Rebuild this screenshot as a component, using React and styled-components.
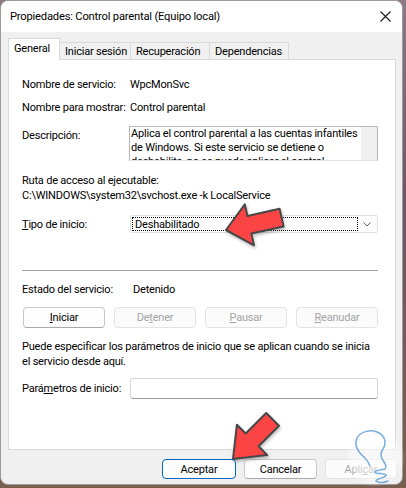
import React from "react";
import styled, { createGlobalStyle } from "styled-components";

const GlobalStyle = createGlobalStyle`
  html, body {
    margin: 0;
    padding: 0;
  }
  body {
    background: #6f5566;
    font-family: "Segoe UI", Roboto, "Liberation Sans", sans-serif;
    font-size: 11px;
    letter-spacing: -0.2px;
    color: #000;
  }
`;

const Screen = styled.div`
  position: relative;
  width: 406px;
  height: 488px;
  overflow: hidden;
  background: linear-gradient(180deg, #8d7a86 0%, #6f5566 40%, #7a5f4f 100%);
`;

const Window = styled.div`
  width: 403px;
  height: 485px;
  box-sizing: border-box;
  border: 1px solid #9b9b9b;
  border-radius: 8px;
  overflow: hidden;
  background: #f0f0f0;
  display: flex;
  flex-direction: column;
`;

const TitleBar = styled.div`
  height: 30px;
  flex: none;
  background: #fff;
  display: flex;
  align-items: center;
  justify-content: space-between;
  padding: 0 8px 1px 9px;
  font-size: 11.2px;
`;

const CloseBtn = styled.div`
  width: 12px;
  height: 12px;
  display: flex;
  align-items: center;
  justify-content: center;
  margin-right: 3px;
`;

const Body = styled.div`
  flex: 1;
  display: flex;
  flex-direction: column;
  padding: 6px 5px 0 7px;
`;

const Tabs = styled.div`
  display: flex;
  align-items: flex-end;
  height: 22px;
  position: relative;
  z-index: 1;
  margin-bottom: -1px;
`;

const Tab = styled.div`
  box-sizing: border-box;
  width: ${(p) => p.$w}px;
  height: ${(p) => (p.$active ? 22 : 18)}px;
  border: 1px solid #d9d9d9;
  border-bottom: ${(p) => (p.$active ? "none" : "1px solid #d9d9d9")};
  margin-left: ${(p) => (p.$active ? 0 : -1)}px;
  background: ${(p) => (p.$active ? "#fff" : "#f0f0f0")};
  display: flex;
  align-items: center;
  padding: ${(p) => (p.$active ? "0 0 3px 5px" : "0 0 0 5px")};
  white-space: nowrap;
`;

const Panel = styled.div`
  box-sizing: border-box;
  width: 388px;
  height: 391px;
  background: #fff;
  border: 1px solid #d9d9d9;
  padding: 0 17px 0 13px;
  display: flex;
  flex-direction: column;
`;

const Field = styled.div`
  display: grid;
  grid-template-columns: ${(p) => p.$col || 108}px 1fr;
  align-items: ${(p) => (p.$top ? "start" : "center")};
  margin-top: ${(p) => p.$mt || 0}px;
  line-height: 15px;
  white-space: nowrap;
`;

const Label = styled.div`
  padding-top: ${(p) => p.$pt || 0}px;
`;

const Line = styled.div`
  line-height: 15px;
  margin-top: ${(p) => p.$mt || 0}px;
  white-space: nowrap;
`;

const DescBox = styled.div`
  box-sizing: border-box;
  height: 35px;
  margin-left: -1px;
  border: 1px solid #b7b7b7;
  border-bottom-color: #e3e3e3;
  display: flex;
  overflow: hidden;
`;

const DescText = styled.div`
  flex: 1;
  height: 33px;
  overflow: hidden;
  padding: 0 2px 0 1px;
  line-height: 14px;
  white-space: normal;
`;

const ScrollTrack = styled.div`
  width: 16px;
  flex: none;
  background: #f0f0f0;
`;

const Combo = styled.div`
  box-sizing: border-box;
  height: 18px;
  border: 1px solid #e0e0e0;
  border-radius: 2px;
  display: flex;
  align-items: center;
  padding: 1px;
`;

const Focus = styled.div`
  flex: 1;
  height: 100%;
  box-sizing: border-box;
  border: 1px dotted #000;
  display: flex;
  align-items: center;
  padding-left: 2px;
`;

const Chevron = styled.div`
  width: 18px;
  display: flex;
  justify-content: center;
`;

const Separator = styled.div`
  height: 1px;
  background: #a0a0a0;
  margin-top: ${(p) => p.$mt}px;
`;

const ButtonRow = styled.div`
  display: flex;
  justify-content: space-between;
  margin: ${(p) => p.$mt}px 0 0 1px;
`;

const Button = styled.div`
  box-sizing: border-box;
  width: ${(p) => p.$w || 82}px;
  height: ${(p) => p.$h || 21}px;
  border: 1px solid ${(p) => (p.$primary ? "#0067c0" : p.$disabled ? "#e3e3e3" : "#c9c9c9")};
  border-bottom-color: ${(p) => (p.$primary ? "#0067c0" : p.$disabled ? "#e3e3e3" : "#a9a9a9")};
  border-radius: 4px;
  background: ${(p) => (p.$disabled ? "#fbfbfb" : "#fdfdfd")};
  color: ${(p) => (p.$disabled ? "#a3a3a3" : "#000")};
  display: flex;
  align-items: center;
  justify-content: center;
  line-height: 15px;
`;

const Key = styled.span`
  text-decoration: underline;
  text-underline-offset: 1px;
`;

const Paragraph = styled.div`
  margin-top: ${(p) => p.$mt}px;
  line-height: 15px;
  white-space: nowrap;
`;

const Input = styled.div`
  box-sizing: border-box;
  height: 21px;
  border: 1px solid #d6d6d6;
  border-bottom-color: #9a9a9a;
  border-radius: 3px;
`;

const Footer = styled.div`
  display: flex;
  justify-content: flex-end;
  gap: 8px;
  margin-top: 9px;
`;

const Overlay = styled.svg`
  position: absolute;
  left: 0;
  top: 0;
  pointer-events: none;
`;

const Arrow = ({ points }) => (
  <polygon
    points={points}
    fill="#fb4444"
    stroke="#474747"
    strokeWidth="2"
    strokeLinejoin="round"
    filter="url(#shadow)"
  />
);

export default function App() {
  return (
    <Screen>
      <GlobalStyle />
      <Window>
        <TitleBar>
          <span>Propiedades: Control parental (Equipo local)</span>
          <CloseBtn>
            <svg width="11" height="11" viewBox="0 0 11 11">
              <path d="M0.5 0.5 L10.5 10.5 M10.5 0.5 L0.5 10.5" stroke="#1a1a1a" strokeWidth="1.1" />
            </svg>
          </CloseBtn>
        </TitleBar>
        <Body>
          <Tabs>
            <Tab $active $w={52}>General</Tab>
            <Tab $w={72}>Iniciar sesión</Tab>
            <Tab $w={80}>Recuperación</Tab>
            <Tab $w={80}>Dependencias</Tab>
          </Tabs>
          <Panel>
            <Field $mt={17}>
              <Label>Nombre de servicio:</Label>
              <div>WpcMonSvc</div>
            </Field>
            <Field $mt={8}>
              <Label>Nombre para mostrar:</Label>
              <div>Control parental</div>
            </Field>
            <Field $mt={11} $top>
              <Label $pt={2}>Descripción:</Label>
              <DescBox>
                <DescText>
                  Aplica el control parental a las cuentas infantiles de Windows. Si este servicio se detiene o
                  deshabilita, no se puede aplicar el control parental.
                </DescText>
                <ScrollTrack />
              </DescBox>
            </Field>
            <Line $mt={12}>Ruta de acceso al ejecutable:</Line>
            <Line>C:\WINDOWS\system32\svchost.exe -k LocalService</Line>
            <Field $mt={12}>
              <Label>
                <Key>T</Key>ipo de inicio:
              </Label>
              <Combo>
                <Focus>Deshabilitado</Focus>
                <Chevron>
                  <svg width="8" height="5" viewBox="0 0 8 5">
                    <path d="M0.5 0.5 L4 4 L7.5 0.5" fill="none" stroke="#5c5c5c" strokeWidth="1" />
                  </svg>
                </Chevron>
              </Combo>
            </Field>
            <Separator $mt={37} />
            <Field $mt={11} $col={111}>
              <Label>Estado del servicio:</Label>
              <div>Detenido</div>
            </Field>
            <ButtonRow $mt={10}>
              <Button>
                <span>
                  <Key>I</Key>niciar
                </span>
              </Button>
              <Button $disabled>
                <span>
                  De<Key>t</Key>ener
                </span>
              </Button>
              <Button $disabled>
                <span>
                  <Key>P</Key>ausar
                </span>
              </Button>
              <Button $disabled>
                <span>
                  <Key>R</Key>eanudar
                </span>
              </Button>
            </ButtonRow>
            <Paragraph $mt={11}>
              Puede especificar los parámetros de inicio que se aplican cuando se inicia
              <br />
              el servicio desde aquí.
            </Paragraph>
            <Field $mt={9}>
              <Label>
                Pará<Key>m</Key>etros de inicio:
              </Label>
              <Input />
            </Field>
          </Panel>
          <Footer>
            <Button $primary $w={74} $h={20}>
              Aceptar
            </Button>
            <Button $w={73} $h={20}>
              Cancelar
            </Button>
            <Button $disabled $w={72} $h={20}>
              <span>
                Apli<Key>c</Key>ar
              </span>
            </Button>
          </Footer>
        </Body>
      </Window>
      <Overlay width="406" height="488" viewBox="0 0 406 488">
        <defs>
          <filter id="shadow" x="-20%" y="-20%" width="140%" height="140%">
            <feDropShadow dx="1" dy="2" stdDeviation="1.5" floodColor="#000" floodOpacity="0.25" />
          </filter>
          <radialGradient id="glow">
            <stop offset="0%" stopColor="#fff" stopOpacity="0.55" />
            <stop offset="75%" stopColor="#fff" stopOpacity="0.45" />
            <stop offset="100%" stopColor="#fff" stopOpacity="0" />
          </radialGradient>
        </defs>
        <Arrow points="226,230 244.8,204.3 247.4,216 279.6,208.8 283.6,226.4 251.4,233.6 254,245.3" />
        <Arrow points="233,459 236.9,424.7 245.7,433.5 266.2,413 279,425.8 258.5,446.3 267.3,455.1" />
        <circle cx="375" cy="457" r="30" fill="url(#glow)" />
        <g fill="none" stroke="#7aaedc" strokeWidth="1.5" strokeLinecap="round" strokeLinejoin="round">
          <path d="M364 457 C358 452 354 445 357 438 C360 432 370 429 377 432 C385 435 387 443 383 449 C380 453 381 458 384 462" />
          <path d="M364 457 C367 460 369 463 370 466" />
          <path d="M384 462 C386 465 387 467 385 469 C379 470 372 471 376 473 C382 474 390 474 384 477 C378 479 373 481 378 482 C382 483 386 482 388 481" />
        </g>
      </Overlay>
    </Screen>
  );
}
